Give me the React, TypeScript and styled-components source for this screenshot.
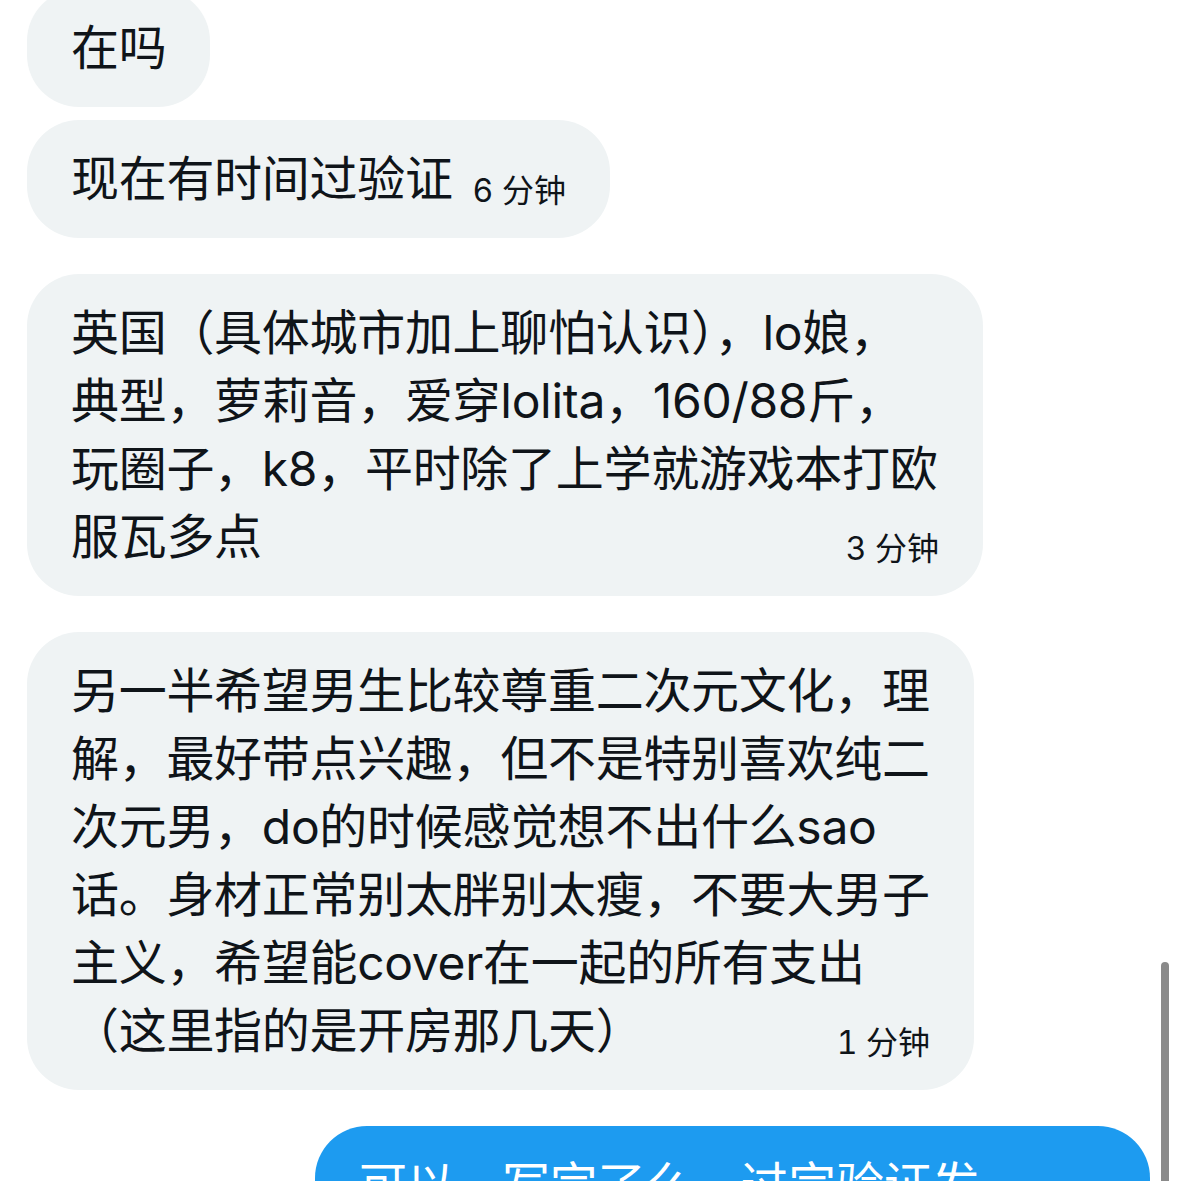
import styled, { createGlobalStyle } from "styled-components";

const GlobalStyle = createGlobalStyle`
  html, body {
    margin: 0;
    padding: 0;
    background: #ffffff;
  }
  body {
    height: 1181px;
    overflow: hidden;
    font-family: "Inter", "Noto Sans CJK SC", sans-serif;
    color: #0f1419;
  }
`;

const Thread = styled.div`
  position: relative;
  height: 1181px;
  overflow: hidden;
`;

const Messages = styled.div`
  display: flex;
  flex-direction: column;
  gap: 36px;
  margin-top: -11px;
  padding: 0 29px 0 27px;
`;

const Group = styled.div<{ $mine?: boolean }>`
  display: flex;
  flex-direction: column;
  align-items: ${(p) => (p.$mine ? "flex-end" : "flex-start")};
  gap: 13px;
`;

const Bubble = styled.div<{ $mine?: boolean; $maxW?: number }>`
  display: inline-block;
  box-sizing: border-box;
  max-width: ${(p) => p.$maxW ?? 956}px;
  padding: 25px 44px;
  border-radius: 52px;
  background: ${(p) => (p.$mine ? "#1d9bf0" : "#eff3f4")};
  color: ${(p) => (p.$mine ? "#ffffff" : "#0f1419")};
  font-size: 48px;
  line-height: 68px;
  letter-spacing: -0.3px;
  line-break: strict;
`;

const MineBubble = styled(Bubble)`
  width: 835px;
  max-width: none;
  height: 120px;
`;

const Time = styled.span`
  float: right;
  margin: 26px 0 0 20px;
  font-size: 32px;
  line-height: 40px;
  font-variant-numeric: tabular-nums;
  letter-spacing: 0;
`;

const ScrollThumb = styled.div`
  position: absolute;
  right: 10px;
  top: 962px;
  width: 8px;
  height: 260px;
  border-radius: 4px;
  background: #8a8a8a;
`;

type Msg = { text: string; time?: string; maxW?: number };

const incoming: Msg[][] = [
  [{ text: "在吗" }, { text: "现在有时间过验证", time: "6 分钟" }],
  [
    {
      text: "英国（具体城市加上聊怕认识），lo娘，典型，萝莉音，爱穿lolita，160/88斤，玩圈子，k8，平时除了上学就游戏本打欧服瓦多点",
      time: "3 分钟",
    },
  ],
  [
    {
      text: "另一半希望男生比较尊重二次元文化，理解，最好带点兴趣，但不是特别喜欢纯二次元男，do的时候感觉想不出什么sao话。身材正常别太胖别太瘦，不要大男子主义，希望能cover在一起的所有支出（这里指的是开房那几天）",
      time: "1 分钟",
      maxW: 947,
    },
  ],
];

export default function App() {
  return (
    <>
      <GlobalStyle />
      <Thread>
        <Messages>
          {incoming.map((group, gi) => (
            <Group key={gi}>
              {group.map((m, i) => (
                <Bubble key={i} $maxW={m.maxW}>
                  {m.text}
                  {m.time && <Time>{m.time}</Time>}
                </Bubble>
              ))}
            </Group>
          ))}
          <Group $mine>
            <MineBubble $mine>可以，写完了么，过完验证发</MineBubble>
          </Group>
        </Messages>
        <ScrollThumb />
      </Thread>
    </>
  );
}
